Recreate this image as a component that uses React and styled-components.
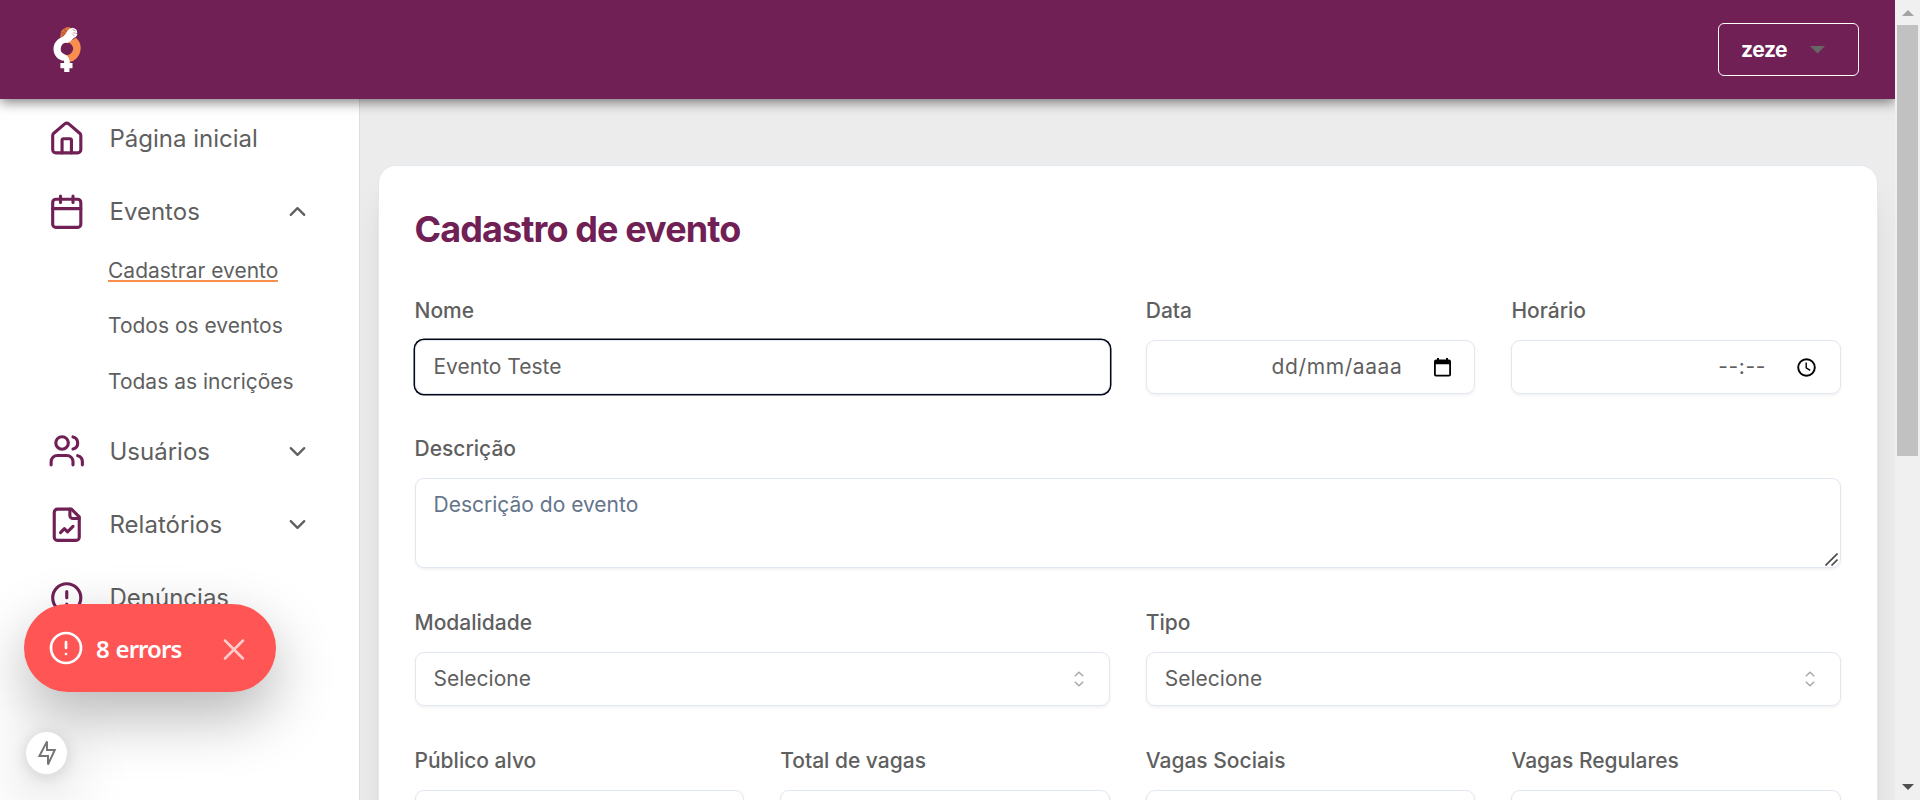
import React from "react";
import styled, { createGlobalStyle } from "styled-components";

const color = {
  brand: "#702055",
  accent: "#f98f4e",
  text: "#5f5f5f",
  line: "#e2e8f0",
};

const GlobalStyle = createGlobalStyle`
  *, *::before, *::after { box-sizing: border-box; }
  body { margin: 0; overflow: hidden; font-family: "Inter", sans-serif; color: ${color.text}; }
`;

const Screen = styled.div`
  display: flex;
  width: 1920px;
  height: 800px;
  overflow: hidden;
  position: relative;
`;

const Page = styled.div`
  display: flex;
  flex-direction: column;
  width: 1895px;
  height: 800px;
  overflow: hidden;
`;

const Header = styled.header`
  display: flex;
  align-items: center;
  justify-content: space-between;
  flex: none;
  height: 99px;
  padding: 0 36px 0 48px;
  background: ${color.brand};
  box-shadow: 0 3px 12px rgba(0, 0, 0, 0.52);
  position: relative;
  z-index: 2;
`;

const UserButton = styled.button`
  display: flex;
  align-items: center;
  justify-content: space-between;
  width: 141px;
  height: 53px;
  padding: 0 33px 0 22px;
  border: 1px solid #fff;
  border-radius: 6px;
  background: transparent;
  color: #fff;
  font: 700 21px "Inter", sans-serif;
  letter-spacing: -0.4px;
`;

const Body = styled.div`
  display: flex;
  flex: 1;
  min-height: 0;
  background: #ececec;
`;

const Sidebar = styled.nav`
  flex: none;
  width: 360px;
  padding: 3px 48px 0 48px;
  background: #fff;
  border-right: 1px solid #dedede;
`;

const MenuItem = styled.div`
  display: flex;
  align-items: center;
  height: 73.3px;
  font-size: 24px;
  font-weight: 400;
  svg { flex: none; }
`;

const MenuLabel = styled.span`
  flex: 1;
  margin-left: 24px;
`;

const SubMenu = styled.ul`
  list-style: none;
  margin: 0;
  padding: 0 0 0 60px;
  height: 166px;
`;

const SubItem = styled.li`
  height: 55.5px;
  padding-top: 7px;
  font-size: 21px;
  font-weight: 400;
  line-height: 29px;
  white-space: nowrap;
`;

const SubLink = styled.span`
  display: inline-block;
  height: 26px;
  border-bottom: 2px solid ${(p) => (p.$active ? color.accent : "transparent")};
`;

const Main = styled.main`
  flex: 1;
  min-width: 0;
  padding: 66px 17.5px 0 18px;
  overflow: hidden;
`;

const Card = styled.section`
  height: 900px;
  padding: 37px 35.5px 36px 35.5px;
  background: #fff;
  border: 1px solid ${color.line};
  border-radius: 18px;
  box-shadow: 0 30px 37.5px -7.5px rgba(0, 0, 0, 0.1), 0 12px 15px -9px rgba(0, 0, 0, 0.1);
`;

const Title = styled.h1`
  margin: 0 0 37px;
  font-size: 36px;
  font-weight: 700;
  line-height: 52px;
  letter-spacing: -0.9px;
  color: ${color.brand};
`;

const FormGrid = styled.div`
  display: grid;
  grid-template-columns: repeat(4, 1fr);
  gap: 36px;
`;

const FieldGroup = styled.div`
  grid-column: span ${(p) => p.$span || 1};
`;

const Label = styled.div`
  margin-bottom: 11px;
  font-size: 21px;
  font-weight: 500;
  line-height: 37px;
`;

const Control = styled.div`
  display: flex;
  align-items: ${(p) => (p.$multiline ? "flex-start" : "center")};
  justify-content: ${(p) => (p.$end ? "flex-end" : "space-between")};
  height: ${(p) => (p.$multiline ? 90 : 54)}px;
  padding: ${(p) => (p.$multiline ? "11px 2px 1px 18px" : p.$end ? `0 ${p.$end}px` : "0 21px 0 18px")};
  border: 1px solid ${color.line};
  border-radius: 9px;
  background: #fff;
  box-shadow: ${(p) =>
    p.$focused ? "0 0 0 1.5px #020817" : "0 1.5px 3px rgba(0, 0, 0, 0.05)"};
  font-size: 21px;
  font-weight: 400;
  line-height: 30px;
`;

const Placeholder = styled.span`
  color: #64748b;
`;

const Mask = styled.span`
  margin-right: ${(p) => p.$gap}px;
  letter-spacing: 0.6px;
`;

const ResizeHandle = styled.svg`
  align-self: flex-end;
`;

const Scrollbar = styled.div`
  display: flex;
  flex-direction: column;
  align-items: center;
  justify-content: space-between;
  width: 25px;
  height: 800px;
  background: #f0f0f0;
`;

const ScrollTop = styled.div`
  display: flex;
  flex-direction: column;
  align-items: center;
  svg { margin: 10px 0 9px; }
`;

const Thumb = styled.div`
  width: 21px;
  height: 431px;
  background: #c1c1c1;
`;

const ArrowDown = styled.svg`
  margin-bottom: 10px;
`;

const ErrorToast = styled.div`
  position: absolute;
  left: 24px;
  top: 604px;
  z-index: 3;
  display: flex;
  align-items: center;
  width: 252px;
  height: 88px;
  padding: 0 24px;
  border-radius: 44px;
  background: #ff5555;
  color: #fff;
  font: 600 24px "Noto Sans", sans-serif;
  box-shadow: 0 24px 60px rgba(0, 0, 0, 0.29);
`;

const ErrorText = styled.span`
  flex: 1;
  margin: 0 0 0 12px;
  letter-spacing: -0.95px;
  word-spacing: 1.5px;
  white-space: nowrap;
`;

const BuildBadge = styled.div`
  position: absolute;
  left: 25px;
  top: 731px;
  z-index: 3;
  display: flex;
  align-items: center;
  justify-content: center;
  width: 43px;
  height: 44px;
  border-radius: 50%;
  border: 1px solid #e3e3e3;
  background: #fff;
  box-shadow: 0 16px 60px rgba(0, 0, 0, 0.25), 0 3px 15px rgba(0, 0, 0, 0.12);
`;

const Stroke = ({ size = 37.5, stroke = color.brand, width = 2, children, ...rest }) => (
  <svg
    width={size}
    height={size}
    viewBox="0 0 24 24"
    fill="none"
    stroke={stroke}
    strokeWidth={width}
    strokeLinecap="round"
    strokeLinejoin="round"
    {...rest}
  >
    {children}
  </svg>
);

const HouseIcon = () => (
  <Stroke>
    <path d="M15 21v-8a1 1 0 0 0-1-1h-4a1 1 0 0 0-1 1v8" />
    <path d="M3 10a2 2 0 0 1 .709-1.528l7-5.999a2 2 0 0 1 2.582 0l7 5.999A2 2 0 0 1 21 10v9a2 2 0 0 1-2 2H5a2 2 0 0 1-2-2z" />
  </Stroke>
);

const CalendarIcon = () => (
  <Stroke>
    <path d="M8 2v4M16 2v4M3 10h18" />
    <rect x="3" y="4" width="18" height="18" rx="2" />
  </Stroke>
);

const UsersIcon = () => (
  <Stroke>
    <path d="M16 21v-2a4 4 0 0 0-4-4H6a4 4 0 0 0-4 4v2" />
    <circle cx="9" cy="7" r="4" />
    <path d="M22 21v-2a4 4 0 0 0-3-3.87M16 3.13a4 4 0 0 1 0 7.75" />
  </Stroke>
);

const ReportIcon = () => (
  <Stroke>
    <path d="M15 2H6a2 2 0 0 0-2 2v16a2 2 0 0 0 2 2h12a2 2 0 0 0 2-2V7Z" />
    <path d="M14 2v4a2 2 0 0 0 2 2h4" />
    <path d="m16 13-3.5 3.5-2-2L8 17" />
  </Stroke>
);

const AlertIcon = () => (
  <Stroke>
    <circle cx="12" cy="12" r="9" />
    <path d="M12 8v4M12 16h.01" />
  </Stroke>
);

const Chevron = ({ up }) => (
  <Stroke size={27} stroke={color.text}>
    <path d={up ? "m18 15-6-6-6 6" : "m6 9 6 6 6-6"} />
  </Stroke>
);

const SortIcon = () => (
  <svg width="18" height="18" viewBox="0 0 18 18" fill="none" stroke="#a9a9a9" strokeWidth="1.5">
    <path d="M4.8 6.2 9 2.2l4.2 4M4.8 11.8l4.2 4 4.2-4" />
  </svg>
);

const DateIcon = () => (
  <svg width="17" height="19" viewBox="0 0 17 19">
    <path
      d="M2 1.5h1V0h2v1.5h7V0h2v1.5h1a2 2 0 0 1 2 2v13a2 2 0 0 1-2 2H2a2 2 0 0 1-2-2v-13a2 2 0 0 1 2-2ZM1.8 6.3v10.5h13.4V6.3Z"
      fill="#000"
      fillRule="evenodd"
    />
  </svg>
);

const ClockIcon = () => (
  <svg width="19" height="19" viewBox="0 0 19 19" fill="none" stroke="#000">
    <circle cx="9.5" cy="9.5" r="8.3" strokeWidth="1.9" />
    <path d="M9.2 4.6v5.3l4 2.4" strokeWidth="1.4" />
  </svg>
);

const LogoMark = styled.svg`
  margin-bottom: 1px;
`;

const Logo = () => (
  <LogoMark width="40" height="48" viewBox="48 25 40 48">
    <path d="M60.3 38 60.8 32q1-2.600 3.600-3.400l1.800-1.400 3.200-.2 2 1.800-5 9.200Z" fill="#d9713f" />
    <path d="m61.500 32.500 4 1.200m-3.200 1.500 3 .8m-1.500-6.500 3 2.200" stroke="#8f3d45" strokeWidth=".7" />
    <path
      d="M76 37.700A14.2 14.2 0 0 1 69.8 62L65.500 55A6 6 0 1 0 68 42.6Z"
      fill="#f98f4e"
    />
    <path
      d="M62 37.2C64.8 35.8 66 33.5 67.3 31l2.2-2.3 3.1-1 2 .8 1.7 1 .8 2.3.1 3.2-1.2 1.7-2.7 1.8-2.3 2.5-3.4 1.9A5.9 5.9 0 0 0 64 54c2 .8 4 2 4.8 4.2l1 2.8V63h2.700v5.200h-3.100v3.800h-5.2v-3.800H60.4V63h3.7v-2.2C57.8 60 53.500 55 53.500 48.900c0-5.500 3.500-10.100 8.500-11.700Z"
      fill="#fff"
    />
    <path d="m72.400 29.300 3 1.700m-2 1.600 3.300 1M72 33.500l2.500 2.600" stroke="#a06a90" strokeWidth=".7" />
  </LogoMark>
);

const Field = ({ label, span, children, ...control }) => (
  <FieldGroup $span={span}>
    <Label>{label}</Label>
    <Control {...control}>{children}</Control>
  </FieldGroup>
);

const menu = [
  { label: "Página inicial", Icon: HouseIcon },
  {
    label: "Eventos",
    Icon: CalendarIcon,
    items: ["Cadastrar evento", "Todos os eventos", "Todas as incrições"],
  },
  { label: "Usuários", Icon: UsersIcon, collapsed: true },
  { label: "Relatórios", Icon: ReportIcon, collapsed: true },
  { label: "Denúncias", Icon: AlertIcon },
];

export default function App() {
  return (
    <>
      <GlobalStyle />
      <Screen>
        <Page>
          <Header>
            <Logo />
            <UserButton>
              zeze
              <svg width="15" height="8" viewBox="0 0 15 8">
                <path d="M0 0h15L7.5 7.5Z" fill="#666" />
              </svg>
            </UserButton>
          </Header>
          <Body>
            <Sidebar>
              {menu.map(({ label, Icon, items, collapsed }) => (
                <React.Fragment key={label}>
                  <MenuItem>
                    <Icon />
                    <MenuLabel>{label}</MenuLabel>
                    {(items || collapsed) && <Chevron up={!!items} />}
                  </MenuItem>
                  {items && (
                    <SubMenu>
                      {items.map((item, i) => (
                        <SubItem key={item}>
                          <SubLink $active={i === 0}>{item}</SubLink>
                        </SubItem>
                      ))}
                    </SubMenu>
                  )}
                </React.Fragment>
              ))}
            </Sidebar>
            <Main>
              <Card>
                <Title>Cadastro de evento</Title>
                <FormGrid>
                  <Field label="Nome" span={2} $focused>
                    Evento Teste
                  </Field>
                  <Field label="Data" $end={23}>
                    <Mask $gap={32}>dd/mm/aaaa</Mask>
                    <DateIcon />
                  </Field>
                  <Field label="Horário" $end={24}>
                    <Mask $gap={31}>--:--</Mask>
                    <ClockIcon />
                  </Field>
                  <Field label="Descrição" span={4} $multiline>
                    <Placeholder>Descrição do evento</Placeholder>
                    <ResizeHandle width="13" height="13" viewBox="0 0 13 13" stroke="#4a4a4a" strokeWidth="1.6">
                      <path d="M.5 12.500 12.500 .5M6.500 12.500 12.500 6.500" />
                    </ResizeHandle>
                  </Field>
                  <Field label="Modalidade" span={2}>
                    Selecione
                    <SortIcon />
                  </Field>
                  <Field label="Tipo" span={2}>
                    Selecione
                    <SortIcon />
                  </Field>
                  <Field label="Público alvo" />
                  <Field label="Total de vagas" />
                  <Field label="Vagas Sociais" />
                  <Field label="Vagas Regulares" />
                </FormGrid>
              </Card>
            </Main>
          </Body>
        </Page>
        <Scrollbar>
          <ScrollTop>
            <svg width="12" height="6" viewBox="0 0 12 6">
              <path d="M0 6h12L6 0Z" fill="#a3a3a3" />
            </svg>
            <Thumb />
          </ScrollTop>
          <ArrowDown width="12" height="6" viewBox="0 0 12 6">
            <path d="M0 0h12L6 6Z" fill="#505050" />
          </ArrowDown>
        </Scrollbar>
        <ErrorToast>
          <Stroke size={36} stroke="#fff" width={1.8}>
            <circle cx="12" cy="12" r="10" />
            <path d="M12 8v4M12 16h.01" />
          </Stroke>
          <ErrorText>8 errors</ErrorText>
          <Stroke size={36} stroke="rgba(255,255,255,.7)" width={1.7}>
            <path d="M18 7 6 19M6 7l12 12" />
          </Stroke>
        </ErrorToast>
        <BuildBadge>
          <svg width="20" height="26" viewBox="0 0 20 26" fill="none" stroke="#777" strokeWidth="2">
            <path d="M10 1.500V10h7.800L11 24.500V16H2.400Z" />
          </svg>
        </BuildBadge>
      </Screen>
    </>
  );
}
